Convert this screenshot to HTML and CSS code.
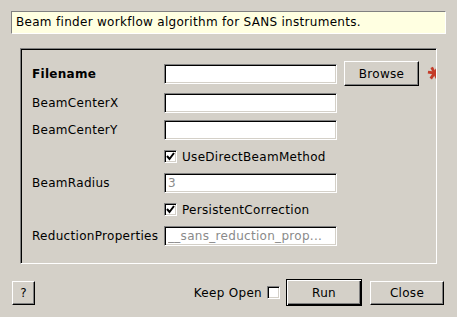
FILE: index.html
```html
<!DOCTYPE html>
<html lang="en">
<head>
    <meta charset="UTF-8">
    <title>BeamFinder</title>
    <link rel="stylesheet" href="styles.css">
</head>
<body>
    <div class="dialog">
        <div class="description">Beam finder workflow algorithm for SANS instruments.</div>

        <div class="scroll-frame">
            <div class="properties">
                <label class="prop-label bold">Filename</label>
                <input class="prop-input" type="text">
                <button class="btn">Browse</button>
                <span class="invalid-star">
                    <svg width="16" height="16" viewBox="0 0 16 16">
                        <g stroke="#c43b28" stroke-width="3" stroke-linecap="butt">
                            <line x1="1" y1="7" x2="15" y2="9"/>
                            <line x1="4" y1="14" x2="12" y2="2"/>
                            <line x1="5" y1="2" x2="11" y2="14"/>
                        </g>
                    </svg>
                </span>

                <label class="prop-label">BeamCenterX</label>
                <input class="prop-input" type="text">

                <label class="prop-label">BeamCenterY</label>
                <input class="prop-input" type="text">

                <div class="check-row">
                    <span class="checkbox">
                        <svg width="9" height="9" viewBox="0 0 9 9"><polyline points="1,4 3.5,7 8,1" fill="none" stroke="#000" stroke-width="2"/></svg>
                    </span>
                    UseDirectBeamMethod
                </div>

                <label class="prop-label">BeamRadius</label>
                <input class="prop-input dim" type="text" value="3">

                <div class="check-row">
                    <span class="checkbox">
                        <svg width="9" height="9" viewBox="0 0 9 9"><polyline points="1,4 3.5,7 8,1" fill="none" stroke="#000" stroke-width="2"/></svg>
                    </span>
                    PersistentCorrection
                </div>

                <label class="prop-label">ReductionProperties</label>
                <input class="prop-input dim" type="text" value="__sans_reduction_prop...">
            </div>
        </div>

        <div class="button-bar">
            <button class="btn btn-help">?</button>
            <span class="spacer"></span>
            <span class="keep-open">Keep Open</span>
            <span class="checkbox keep-box"></span>
            <button class="btn btn-default">Run</button>
            <button class="btn btn-close">Close</button>
        </div>
    </div>
</body>
</html>
```

FILE: styles.css
```css
body {
    margin: 0;
    background-color: #d4d0c8;
    font-family: "DejaVu Sans", sans-serif;
    font-size: 12px;
    letter-spacing: 0.3px;
    color: #000;
}

.dialog {
    width: 457px;
    height: 317px;
    padding-top: 11px;
    box-sizing: border-box;
}

.description {
    margin: 0 11px;
    height: 23px;
    box-sizing: border-box;
    padding-left: 4px;
    line-height: 21px;
    background-color: #ffffe1;
    border: 1px solid;
    border-color: #808080 #ffffff #ffffff #808080;
}

.scroll-frame {
    margin: 14px 0 0 20px;
    width: 417px;
    height: 216px;
    box-sizing: border-box;
    overflow: hidden;
    border: 1px solid;
    border-color: #808080 #ffffff #ffffff #808080;
    box-shadow: inset 1px 1px 0 #000000, inset -1px -1px 0 #d4d0c8;
}

.properties {
    display: grid;
    grid-template-columns: 125px 173px 75px 16px;
    column-gap: 7px;
    row-gap: 7px;
    align-items: center;
    padding: 12px 0 0 11px;
}

.prop-label {
    grid-column: 1;
    white-space: nowrap;
}

.prop-label.bold {
    font-weight: bold;
}

.prop-input {
    grid-column: 2;
    height: 20px;
    box-sizing: border-box;
    margin: 0;
    padding: 0 4px;
    font-family: "DejaVu Sans", sans-serif;
    font-size: 12px;
    letter-spacing: 0.3px;
    background-color: #ffffff;
    border: 1px solid;
    border-color: #808080 #ffffff #ffffff #808080;
    box-shadow: inset 1px 1px 0 #000000, inset -1px -1px 0 #d4d0c8;
    outline: none;
}

.prop-input.dim {
    color: #8a8a8a;
    padding-left: 3px;
}

.btn {
    height: 25px;
    margin: 0;
    padding: 0;
    font-family: "DejaVu Sans", sans-serif;
    font-size: 12px;
    letter-spacing: 0.3px;
    color: #000;
    background-color: #d4d0c8;
    border: 1px solid;
    border-color: #ffffff #000000 #000000 #ffffff;
    box-shadow: inset -1px -1px 0 #808080;
}

.invalid-star {
    display: flex;
    margin: -1px 0 0 1px;
}

.check-row {
    grid-column: 2 / span 3;
    height: 19px;
    display: flex;
    align-items: center;
    gap: 5px;
}

.checkbox {
    width: 13px;
    height: 13px;
    box-sizing: border-box;
    display: flex;
    align-items: center;
    justify-content: center;
    background-color: #ffffff;
    border: 1px solid;
    border-color: #808080 #ffffff #ffffff #808080;
    box-shadow: inset 1px 1px 0 #000000, inset -1px -1px 0 #d4d0c8;
}

.button-bar {
    display: flex;
    align-items: center;
    margin-top: 15px;
    padding: 0 13px 0 12px;
    height: 27px;
}

.btn-help {
    width: 23px;
    height: 24px;
}

.spacer {
    flex: 1;
}

.keep-open {
    margin-right: 5px;
}

.keep-box {
    margin-right: 6px;
}

.btn-default {
    width: 76px;
    height: 27px;
    border-color: #000000;
    box-shadow: inset 1px 1px 0 #ffffff, inset -1px -1px 0 #000000, inset -2px -2px 0 #808080;
}

.btn-close {
    width: 74px;
    height: 24px;
    margin-left: 8px;
}
```
